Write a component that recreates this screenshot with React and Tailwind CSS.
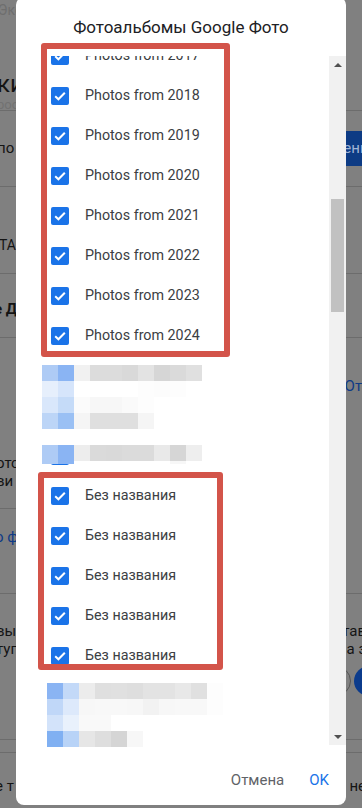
import React from "react";

const FONT = { fontFamily: "Roboto, 'Noto Sans', Arial, sans-serif" };

const YEARS = ["2017", "2018", "2019", "2020", "2021", "2022", "2023", "2024"];

// items after the years: null = hidden (pixelated) row
const ROWS = [
  ...YEARS.map((y) => `Photos from ${y}`),
  null,
  null,
  null,
  "Без названия",
  "Без названия",
  "Без названия",
  "Без названия",
  "Без названия",
  null,
  null,
];

const MOSAIC_TOP = [
  ["bg-[#aecbf5]", "bg-[#8ab4f3]", "bg-[#f1f1f1]", "bg-[#dcdcdc]", "bg-[#dcdcdc]", "bg-[#d9d9d9]", "bg-[#e3e3e3]", "bg-[#d6d6d6]", "bg-[#dadada]", "bg-[#e0e0e0]"],
  ["bg-[#e6effc]", "bg-[#d6e5fb]", "bg-white", "bg-white", "bg-white", "bg-white", "bg-[#fdfdfd]", "bg-[#fcfcfc]", "bg-[#fdfdfd]", "bg-white"],
  ["bg-[#d9e7fb]", "bg-[#c5dbf8]", "bg-[#fbfbfb]", "bg-[#f7f7f7]", "bg-[#f7f7f7]", "bg-[#fafafa]", "bg-[#fdfdfd]", "bg-white", "bg-white", "bg-white"],
  ["bg-[#bcd5f7]", "bg-[#9ac0f4]", "bg-[#f5f5f5]", "bg-[#dfdfdf]", "bg-[#dfdfdf]", "bg-[#dfdfdf]", "bg-[#f5f5f5]", "bg-white", "bg-white", "bg-white"],
];

const MOSAIC_MID = ["bg-[#aecbf5]", "bg-[#8ab4f3]", "bg-[#ededed]", "bg-[#dadada]", "bg-[#d9d9d9]", "bg-[#dbdbdb]", "bg-[#dbdbdb]", "bg-[#e9e9e9]", "bg-[#d6d6d6]", "bg-[#eeeeee]"];

const MOSAIC_BOTTOM = [
  ["bg-[#8ab4f3]", "bg-[#c3d9f8]", "bg-[#ececec]", "bg-[#dfdfdf]", "bg-[#e0e0e0]", "bg-[#dedede]", "bg-[#e3e3e3]", "bg-[#e3e3e3]", "bg-[#e8e8e8]", "bg-[#e0e0e0]", "bg-[#fdfdfd]"],
  ["bg-[#c0d7f8]", "bg-[#dde9fb]", "bg-[#f7f7f7]", "bg-[#f8f8f8]", "bg-[#f8f8f8]", "bg-[#f7f7f7]", "bg-[#f2f2f2]", "bg-[#f7f7f7]", "bg-[#f8f8f8]", "bg-[#f8f8f8]", "bg-[#fdfdfd]"],
  ["bg-[#d3e3fa]", "bg-[#e9f1fc]", "bg-[#f9f9f9]", "bg-[#f9f9f9]", "bg-white", "bg-white", "bg-white", "bg-white", "bg-white", "bg-white", "bg-white"],
  ["bg-[#80b0f2]", "bg-[#b8d3f7]", "bg-[#e6e6e6]", "bg-[#dedede]", "bg-[#d5d5d5]", "bg-[#f7f7f7]", "bg-white", "bg-white", "bg-white", "bg-white", "bg-white"],
];

function Checkbox() {
  return (
    <div className="flex h-[18px] w-[18px] shrink-0 items-center justify-center rounded-[2px] bg-[#1a73e8]">
      <svg viewBox="0 0 18 18" className="h-[18px] w-[18px]">
        <path d="M4.2 9.2l3.2 3.1 6.4-6.6" fill="none" stroke="#fff" strokeWidth="2" />
      </svg>
    </div>
  );
}

function MosaicRow({ cells, h = "h-[16px]" }) {
  return (
    <div className="flex">
      {cells.map((c, i) => (
        <div key={i} className={`w-[16px] ${h} ${c}`} />
      ))}
    </div>
  );
}

function Background() {
  return (
    <div className="flex flex-col text-[#141414]">
      {/* header */}
      <div className="flex h-[111px] flex-col border-b border-[#6c6c6c]">
        <p className="-ml-[2px] pt-[1px] text-[14px] leading-[18px] text-[#6e6e6e]">Экспорт</p>
        <h1 className="-ml-[3px] mt-[52px] text-[24px] leading-[26px]">ки</h1>
        <p className="-ml-[3px] text-[13px] leading-[16px] text-[#727272]">pool</p>
      </div>
      {/* row with button */}
      <div className="flex h-[76px] items-center justify-between border-b border-[#6c6c6c]">
        <span className="-ml-[3px] text-[15px]">по</span>
        <span className="-mr-[38px] flex h-[35px] items-center rounded-l-[4px] bg-[#0d3b84] px-4 text-[15px] text-[#9fb3d6]">
          Изменить
        </span>
      </div>
      <div className="flex h-[87px] items-center border-b border-[#6c6c6c] pt-[30px]">
        <span className="-ml-[1px] text-[14px]">ТА</span>
      </div>
      <div className="flex h-[64px] items-center border-b border-[#6c6c6c] pt-[8px]">
        <span className="-ml-[6px] text-[15px] font-bold">е Д</span>
      </div>
      <div className="flex h-[170px] flex-col">
        <div className="mt-[37px] flex justify-end">
          <span className="-mr-[36px] text-[15px] text-[#0e3a86]">Отмена</span>
        </div>
        <div className="-ml-[4px] mt-[56px] text-[15px] leading-[18px]">
          <p>отс</p>
          <p>ви</p>
        </div>
      </div>
      <div className="mr-[40px] border-t border-[#6c6c6c]" />
      <div className="flex h-[85px] items-start border-b border-[#6c6c6c] pt-[17px]">
        <span className="-ml-[5px] text-[15px] text-[#0e3a86]">о ф</span>
      </div>
      <div className="flex h-[145px] flex-col">
        <div className="mt-[28px] flex justify-between text-[15px] leading-[18px]">
          <div className="-ml-[4px]">
            <p>вы</p>
            <p>туп</p>
          </div>
          <div className="-mr-[4px] text-right">
            <p>тав</p>
            <p>а з</p>
          </div>
        </div>
        <div className="mt-[8px] flex justify-end gap-[3px]">
          <span className="h-[30px] w-[30px] rounded-full border border-[#555]" />
          <span className="-mr-[22px] h-[30px] w-[30px] rounded-full bg-[#0b3b8c]" />
        </div>
      </div>
      <div className="h-[14px] border-y border-[#6c6c6c]" />
      <div className="flex h-[56px] items-center justify-between pt-[10px] text-[15px]">
        <span className="-ml-[5px]">е т</span>
        <span className="-mr-[4px]">не</span>
      </div>
    </div>
  );
}

export default function App() {
  return (
    <div className="relative h-[808px] w-[362px] overflow-hidden bg-[#808080]" style={FONT}>
      <Background />

      {/* dialog */}
      <div className="absolute left-[16px] top-[-3px] flex h-[808px] w-[330px] flex-col rounded-[8px] bg-white">
        <div className="flex h-[59px] items-center justify-center pt-[2px]">
          <h2 className="text-[17px] text-[#202124]">Фотоальбомы Google Фото</h2>
        </div>

        <div className="flex h-[689px]">
          <div className="flex-1 overflow-hidden">
            <ul className="-mt-[20px]">
              {ROWS.map((label, i) => (
                <li key={i} className="flex h-[40px] items-center gap-[16px] pl-[35px]">
                  <Checkbox />
                  {label && <span className="text-[14.3px] text-[#3c4043]">{label}</span>}
                </li>
              ))}
            </ul>
          </div>
          {/* scrollbar */}
          <div className="flex w-[17px] flex-col bg-[#f1f1f1]">
            <div className="flex h-[17px] items-center justify-center">
              <span className="h-0 w-0 border-x-[4px] border-b-[4px] border-x-transparent border-b-[#505050]" />
            </div>
            <div className="mx-[2px] mt-[126px] h-[113px] bg-[#c1c1c1]" />
            <div className="flex-1" />
            <div className="flex h-[17px] items-center justify-center">
              <span className="h-0 w-0 border-x-[4px] border-t-[4px] border-x-transparent border-t-[#505050]" />
            </div>
          </div>
        </div>

        <div className="flex h-[60px] items-center justify-end gap-[25px] pr-[17px] pt-[10px] text-[15px]">
          <button className="text-[#5f6368]">Отмена</button>
          <button className="text-[#1a73e8]">OK</button>
        </div>
      </div>

      {/* pixelated blocks */}
      <div className="absolute left-[42px] top-[365px]">
        {MOSAIC_TOP.map((r, i) => (
          <MosaicRow key={i} cells={r} />
        ))}
        <div className="h-[16px]" />
        <MosaicRow cells={MOSAIC_MID} />
        <MosaicRow
          cells={["bg-[#aecbf5]", "bg-[#8ab4f3]", "bg-white", "bg-white", "bg-white", "bg-white", "bg-white", "bg-white", "bg-[#f7f7f7]", "bg-white"]}
          h="h-[3px]"
        />
      </div>
      <div className="absolute left-[47px] top-[683px]">
        {MOSAIC_BOTTOM.map((r, i) => (
          <MosaicRow key={i} cells={r} />
        ))}
      </div>

      {/* red annotation frames */}
      <div className="absolute left-[41px] top-[43px] h-[314px] w-[189px] rounded-[3px] border-[6px] border-[#d3544a]" />
      <div className="absolute left-[38px] top-[472px] h-[198px] w-[185px] rounded-[3px] border-[6px] border-[#d3544a]" />
    </div>
  );
}
